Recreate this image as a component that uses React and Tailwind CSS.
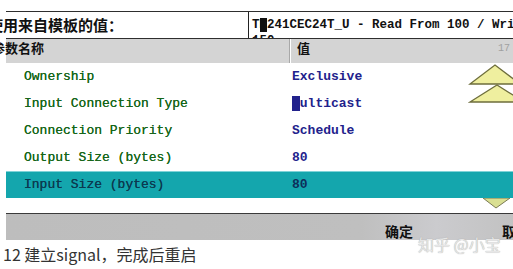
import React from "react";

const mono = { fontFamily: '"Liberation Mono", "Courier New", monospace' };
const cjk = { fontFamily: '"Noto Sans CJK SC", "Noto Sans", sans-serif' };

const rows = [
  { name: "Ownership", value: "Exclusive" },
  { name: "Input Connection Type", value: "Multicast", markFirst: true },
  { name: "Connection Priority", value: "Schedule" },
  { name: "Output Size (bytes)", value: "80" },
  { name: "Input Size (bytes)", value: "80", selected: true },
];

export default function App() {
  return (
    <div className="relative w-[513px] h-[269px] bg-white overflow-hidden">
      <div className="h-[11px]" />
      {/* label row */}
      <div className="flex h-[28px] ml-[6px] border-t border-b border-[#2e2e2e]">
        <div
          className="w-[242px] shrink-0 -ml-[18px] pt-[4px] text-[15px] leading-[18px] font-bold text-[#111] whitespace-nowrap"
          style={cjk}
        >
          使用来自模板的值：
        </div>
        <div
          className="flex-1 ml-[18px] border-l border-[#222] pl-[3px] pt-[5px] overflow-hidden text-[12.5px] leading-[16px] font-bold text-[#111] whitespace-nowrap"
          style={mono}
        >
          <div>
            T<span className="bg-[#111]">M</span>241CEC24T_U - Read From 100 / Write To 150
          </div>
          <div>150</div>
        </div>
      </div>
      {/* header */}
      <div className="flex h-[24px] ml-[6px] bg-[#d4d4d4]">
        <div
          className="w-[283px] shrink-0 -ml-[14px] text-[13px] leading-[17px] font-bold text-[#111] whitespace-nowrap"
          style={cjk}
        >
          参数名称
        </div>
        <div className="ml-[14px] w-px bg-[#a8a8a8]" />
        <div className="flex-1 flex border-l border-white">
          <div className="pl-[6px] text-[13px] leading-[17px] font-bold text-[#111]" style={cjk}>
            值
          </div>
          <div className="ml-auto pr-[3px] pt-[4px] text-[10px] leading-[12px] text-[#a0a0a0]" style={mono}>
            17
          </div>
        </div>
      </div>
      {/* rows */}
      <div className="ml-[6px]">
        {rows.map((r) => (
          <div
            key={r.name}
            className={
              r.selected
                ? "flex h-[27px] items-center bg-[#14a6ad] border-t border-[#7fd3d8]"
                : "flex h-[27px] items-center"
            }
          >
            <div
              className={
                r.selected
                  ? "w-[284px] shrink-0 pl-[18px] text-[13px] text-[#0b3a50] whitespace-nowrap [text-shadow:0_0_0.4px_#0b3a50]"
                  : "w-[284px] shrink-0 pl-[18px] text-[13px] text-[#17661a] whitespace-nowrap [text-shadow:0_0_0.4px_#17661a]"
              }
              style={mono}
            >
              {r.name}
            </div>
            <div
              className={
                r.selected
                  ? "pl-[2px] text-[13px] font-bold text-[#0d2f5a] whitespace-nowrap"
                  : "pl-[2px] text-[13px] font-bold text-[#22228c] whitespace-nowrap"
              }
              style={mono}
            >
              {r.markFirst ? (
                <>
                  <span className="bg-[#22228c]">M</span>
                  {r.value.slice(1)}
                </>
              ) : (
                r.value
              )}
            </div>
          </div>
        ))}
      </div>
      <div className="h-[15px]" />
      {/* footer bar */}
      <div className="flex h-[27px] ml-[6px] border-t border-[#3a3a3a] bg-[linear-gradient(90deg,#bdbdbd_0%,#bfbfbf_70%,#cbcbce_85%,#c2c2c2_100%)] overflow-hidden whitespace-nowrap">
        <div className="pl-[379px] pt-[9px] text-[14px] leading-[16px] font-bold text-[#111]" style={cjk}>
          确定
        </div>
        <div className="ml-[89px] pt-[9px] text-[14px] leading-[16px] font-bold text-[#111]" style={cjk}>
          取消
        </div>
      </div>
      {/* caption */}
      <div className="pl-[3px] pt-[2px] text-[16px] leading-[24px] text-[#333]" style={cjk}>
        12 建立signal，完成后重启
      </div>

      {/* scroll arrows overlay */}
      <svg className="absolute left-[468px] top-[64px]" width="50" height="42" viewBox="0 0 50 42">
        <polygon points="2,20 27,1 52,20" fill="#efef9f" stroke="#6e6e3c" strokeWidth="1.3" />
        <polygon points="2,38 29,21 56,38" fill="#efef9f" stroke="#6e6e3c" strokeWidth="1.3" />
      </svg>
      <svg className="absolute left-[482px] top-[198px]" width="31" height="12" viewBox="0 0 31 12">
        <polygon points="1,0 28,0 14,10" fill="#d9df92" stroke="#7a7a55" strokeWidth="1" />
      </svg>
      {/* watermark */}
      <div
        className="absolute left-[418px] top-[234px] text-[16px] leading-[20px] text-[#e6e6e6] whitespace-nowrap [text-shadow:0_0_1px_#9a9a9a]"
        style={cjk}
      >
        知乎 @小宝
      </div>
    </div>
  );
}
